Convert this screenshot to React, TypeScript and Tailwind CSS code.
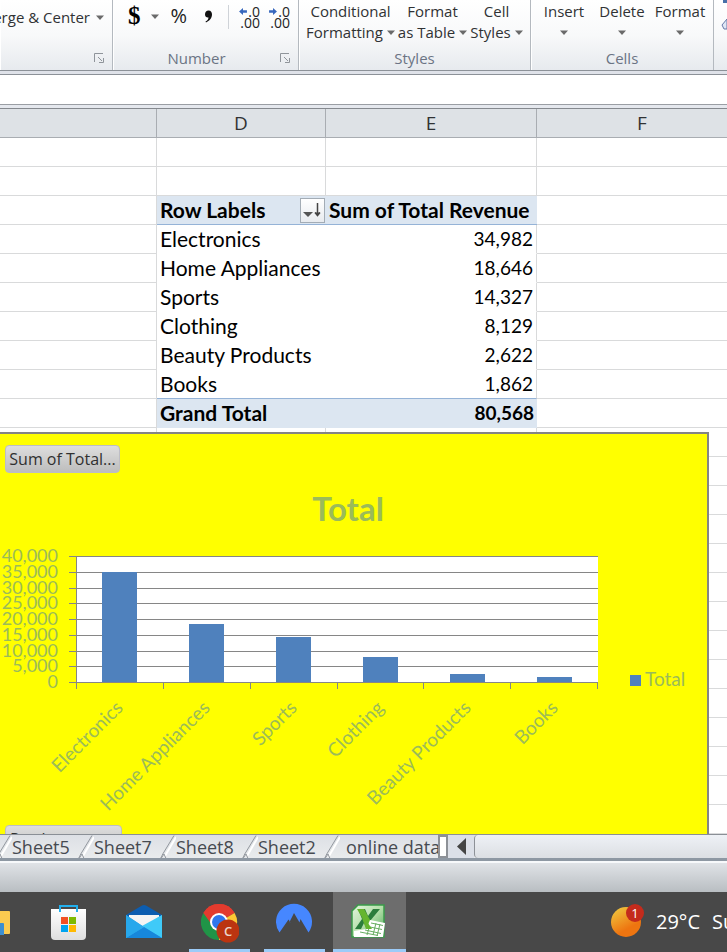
import React from "react";

const UI = "font-['Open_Sans','Noto_Sans',sans-serif]";
const SHEET = "font-['Lato','Liberation_Sans',sans-serif]";

const rows: [string, number][] = [
  ["Electronics", 34982],
  ["Home Appliances", 18646],
  ["Sports", 14327],
  ["Clothing", 8129],
  ["Beauty Products", 2622],
  ["Books", 1862],
];

function Caret() {
  return (
    <svg width="8" height="5" viewBox="0 0 8 5" className="shrink-0" aria-hidden="true">
      <path d="M0 0.5h8L4 5z" fill="#6a6a6a" />
    </svg>
  );
}

function Launcher({ label }: { label: string }) {
  return (
    <button aria-label={label} className="mr-2 p-0">
      <svg width="10" height="10" viewBox="0 0 10 10" fill="none" stroke="#8f949a">
        <path d="M0.5 9V0.5H9M4 4l4 4M9.5 5v4.5H5" />
      </svg>
    </button>
  );
}

function Group({ className, title, children, launcher }: { className: string; title?: string; children: React.ReactNode; launcher?: string }) {
  return (
    <section className={`flex shrink-0 flex-col border-r border-r-[#b4b9bf] shadow-[inset_1px_0_0_#fff] ${className}`}>
      <div className="flex h-[46px] pt-px">{children}</div>
      <div className="flex h-6 items-center text-[15px] leading-6 text-[#6b7484]">
        <h2 className="grow text-center">{title}</h2>
        {launcher && <Launcher label={launcher} />}
      </div>
    </section>
  );
}

function BigButton({ top, bottom, className }: { top: string; bottom?: string; className: string }) {
  return (
    <button className={`flex shrink-0 flex-col items-center whitespace-nowrap text-[15px] leading-[21px] text-[#303234] ${className}`}>
      <span>{top}</span>
      <span className="flex h-[21px] items-center gap-1">
        {bottom}
        <Caret />
      </span>
    </button>
  );
}

function Decimals({ right }: { right?: boolean }) {
  return (
    <button aria-label={right ? "Decrease Decimal" : "Increase Decimal"} className="mt-1 h-6 w-[21px] text-right text-[14px] leading-[11px] text-[#222]">
      <span className="flex items-center justify-between">
        <svg width="8" height="7" viewBox="0 0 9 8" aria-hidden="true">
          <path d={right ? "M9 4L4.5 0v2.5H0v3h4.500V8z" : "M0 4L4.5 0v2.5H9v3H4.500V8z"} fill="#3767bd" />
        </svg>
        .0
      </span>
      <span className="block">.00</span>
    </button>
  );
}

function Ribbon() {
  return (
    <header className={`flex h-[70px] overflow-hidden bg-linear-to-b from-white via-[#f8f9fa] to-[#e7eaee] ${UI}`}>
      <Group className="w-[113px]" title="" launcher="Alignment settings">
        <button className="flex h-8 w-full items-center justify-end gap-1.5 whitespace-nowrap pr-2 text-[15px] text-[#303234]">
          Merge &amp; Center <Caret />
        </button>
      </Group>
      <Group className="w-[186px]" title="Number" launcher="Number settings">
        <div className="flex w-full items-start pl-[15px]">
          <button aria-label="Accounting format" className="flex h-[30px] items-center gap-2.5 font-['Liberation_Serif',serif] text-[25px] font-bold text-black">
            $ <Caret />
          </button>
          <button className="ml-3 h-[30px] text-[20px] leading-[30px] text-[#222]">%</button>
          <button aria-label="Comma style" className="ml-[15px] flex h-[30px] w-3 items-center justify-center">
            <svg width="9" height="13" viewBox="0 0 9 13"><path d="M4.5 0.5C7 .5 8 2.400 8 4.500C8 8 5.500 11 2 12.500L1.500 11.500C3.500 10.500 4.500 9 4.500 7.500C2.500 7.800 1 6.500 1 4.200C1 2 2.500.5 4.500.5z" fill="#111" /></svg>
          </button>
          <span className="ml-3.5 mt-1 h-6 w-px bg-[#cfd3d8]" />
          <span className="ml-2.5 flex gap-[9px]">
            <Decimals />
            <Decimals right />
          </span>
        </div>
      </Group>
      <Group className="w-[232px]" title="Styles">
        <div className="flex gap-1 pl-[7px]">
          <BigButton top="Conditional" bottom="Formatting" className="w-[89px]" />
          <BigButton top="Format" bottom="as Table" className="w-[67px]" />
          <BigButton top="Cell" bottom="Styles" className="w-[53px]" />
        </div>
      </Group>
      <Group className="w-[183px]" title="Cells">
        <div className="flex pl-1">
          <BigButton top="Insert" className="w-[58px]" />
          <BigButton top="Delete" className="w-[58px]" />
          <BigButton top="Format" className="w-[58px]" />
        </div>
      </Group>
      <div className="flex grow flex-col items-end overflow-hidden">
        <svg width="6" height="32" viewBox="0 0 6 32" aria-hidden="true">
          <path d="M2 0h4v3H2z" fill="#4770a8" />
          <path d="M6 19L1 25l2 4h3z" fill="#dfe6f4" stroke="#6678a8" />
        </svg>
      </div>
    </header>
  );
}

const line = "border-[#d9dadb]";

function Sheet() {
  return (
    <table className={`w-[748px] min-w-full table-fixed border-separate border-spacing-0 text-[21px] leading-7 text-black ${SHEET}`}>
      <colgroup>
        <col className="w-[157px]" />
        <col className="w-[169px]" />
        <col className="w-[211px]" />
        <col />
      </colgroup>
      <thead>
        <tr className={`h-[29px] bg-[#dee2e6] text-[19px] text-[#303234] ${UI}`}>
          {["", "D", "E", "F"].map((c) => (
            <th key={c} scope="col" className="border-b border-r border-[#a9adb2] p-0 font-normal">{c}</th>
          ))}
        </tr>
      </thead>
      <tbody>
        {[0, 1].map((i) => <Blank key={i} />)}
        <tr className="h-[29px]">
          <td className={`border-b border-r p-0 ${line}`} />
          <th scope="col" className="whitespace-nowrap border-b border-[#95b3d7] bg-[#dce6f1] p-0 pl-[3px] text-left">
            <span className="flex items-center justify-between pr-px">
              Row Labels
              <button aria-label="Sort and filter" className="flex h-[25px] w-[25px] items-center justify-center border border-[#a3acb5] bg-linear-to-b from-white to-[#e8ebef]">
                <svg width="19" height="17" viewBox="0 0 19 17"><path d="M0 10h10l-5 5z" fill="#555" /><path d="M14.500 1v12M12 10.500l2.500 3 2.500-3" stroke="#444" strokeWidth="1.500" fill="#444" /></svg>
              </button>
            </span>
          </th>
          <th scope="col" className="whitespace-nowrap border-b border-[#95b3d7] bg-[#dce6f1] p-0 pl-[3px] text-left">Sum of Total Revenue</th>
          <td className={`border-b p-0 ${line}`} />
        </tr>
        {rows.map(([name, value], i) => {
          const edge = i === rows.length - 1 ? "border-b border-b-[#95b3d7]" : "border-b border-b-white";
          return (
            <tr key={name} className="h-[29px]">
              <td className={`border-b border-r p-0 ${line}`} />
              <th scope="row" className={`whitespace-nowrap p-0 pl-[3px] text-left font-normal ${edge}`}>{name}</th>
              <td className={`border-r border-r-[#d9dadb] p-0 pr-[3px] text-right text-[19px] ${edge}`}>{value.toLocaleString("en-US")}</td>
              <td className={`border-b p-0 ${line}`} />
            </tr>
          );
        })}
        <tr className="h-[29px] font-bold">
          <td className={`border-b border-r p-0 ${line}`} />
          <th scope="row" className="border-b border-[#dce6f1] bg-[#dce6f1] p-0 pl-[3px] text-left">Grand Total</th>
          <td className="border-b border-[#dce6f1] bg-[#dce6f1] p-0 pr-[3px] text-right text-[19px]">80,568</td>
          <td className={`border-b p-0 ${line}`} />
        </tr>
        {Array.from({ length: 14 }, (_, i) => <Blank key={i} />)}
      </tbody>
    </table>
  );
}

function Blank() {
  return (
    <tr className="h-[29px]">
      {[0, 1, 2, 3].map((c) => <td key={c} className={`border-b border-r p-0 ${line}`} />)}
    </tr>
  );
}

/* Chart coordinates: origin at the inside top-left corner of the yellow area. */
const BASE = 248;
const PLOT_LEFT = 76;
const STEP = 87;

function Chart() {
  return (
    <figure aria-label="Total by category" className="absolute left-0 top-[323px] h-[420px] w-[709px] border-r-2 border-t-2 border-[#848484] bg-[#ffff00]">
      <svg width="707" height="400" viewBox="0 0 707 400" className={SHEET} fill="#9bbb59">
        <text x="348" y="87" textAnchor="middle" fontSize="33" fontWeight="700">Total</text>
        <rect x={PLOT_LEFT} y="122" width="522" height="126" fill="#fff" />
        {Array.from({ length: 9 }, (_, i) => {
          const y = Math.round(BASE - i * 15.75);
          return (
            <g key={i}>
              <rect x="69" y={y} width="529" height="1" fill="#868686" />
              <text x="58" y={y + 6} textAnchor="end" fontSize="18">{(i * 5000).toLocaleString("en-US")}</text>
            </g>
          );
        })}
        {rows.map(([name, value], i) => {
          const h = Math.floor((value / 40000) * 126);
          const x = PLOT_LEFT + i * STEP;
          return (
            <g key={name}>
              <rect x={x + 26} y={BASE - h} width="35" height={h} fill="#4f81bd" />
              <text transform={`translate(${x + 48} ${BASE + 27}) rotate(-45)`} textAnchor="end" fontSize="19">{name}</text>
            </g>
          );
        })}
        {Array.from({ length: 7 }, (_, i) => <rect key={i} x={PLOT_LEFT + i * STEP - (i > 3 ? 1 : 0)} y={BASE} width="1" height="7" fill="#868686" />)}
        <rect x={PLOT_LEFT} y="122" width="1" height="127" fill="#868686" />
        <rect x="630" y="241" width="11" height="11" fill="#4f81bd" />
        <text x="645" y="252" fontSize="19">Total</text>
      </svg>
      <button className={`absolute left-[5px] top-[11px] h-7 w-[115px] rounded border border-[#bdbdc6] bg-linear-to-b from-[#dedede] to-[#bdbdbd] text-[16px] leading-[26px] text-[#303030] ${UI}`}>
        Sum of Total...
      </button>
      <button className={`absolute left-[5px] top-[391px] h-7 w-[117px] rounded border border-[#bdbdc6] bg-linear-to-b from-[#dedede] to-[#bdbdbd] pl-1 text-left text-[16px] leading-[26px] text-[#303030] ${UI}`}>
        Product
      </button>
    </figure>
  );
}

function Tab({ name, className = "w-[82px]" }: { name: string; className?: string }) {
  return (
    <button className={`flex h-full shrink-0 items-center whitespace-nowrap text-[18px] leading-6 text-[#464a50] ${className}`}>
      <svg width="16" height="24" viewBox="0 0 16 24" className="shrink-0" fill="none" aria-hidden="true">
        <path d="M5 21L16 2" stroke="#fff" strokeWidth="2" />
        <path d="M0.500 23.500C2 21 2 20 4 17L14 0.500M1 23.500L4 19L6 23.500" stroke="#92979e" />
      </svg>
      {name}
    </button>
  );
}

function TabBar() {
  return (
    <div className={`flex h-[27px] border-b-[3px] border-t border-b-[#8e98a3] border-t-[#8a8f96] bg-linear-to-b from-[#dde0e5] to-[#e9ebed] ${UI}`}>
      <nav aria-label="Sheets" className="flex w-[438px] shrink-0 overflow-hidden">
        <div className="-ml-1 flex">
          <Tab name="Sheet5" />
          <Tab name="Sheet7" />
          <Tab name="Sheet8" />
          <Tab name="Sheet2" />
          <Tab name="online data" className="w-[130px] gap-1.5" />
        </div>
      </nav>
      <span className="h-full w-[10px] shrink-0 border-2 border-[#8d9197] bg-white" />
      <button aria-label="Scroll left" className="flex w-[26px] shrink-0 items-center justify-center bg-[#dce0e8]">
        <svg width="9" height="17" viewBox="0 0 9 17"><path d="M9 0v17L0 8.500z" fill="#444" /></svg>
      </button>
      <div className="grow rounded-l-sm border-l border-[#8d9197] bg-linear-to-b from-[#eef1f6] to-[#dcdfe3]" />
    </div>
  );
}

function Task({ label, running, active, children }: { label: string; running?: boolean; active?: boolean; children: React.ReactNode }) {
  return (
    <button aria-label={label} className={`flex w-[73px] shrink-0 flex-col items-center justify-between pt-2.5 ${active ? "bg-[#6d6d6d]" : ""}`}>
      {children}
      <span className={`h-[3px] ${active ? "w-full" : "w-[61px]"} ${running ? "bg-[#9ccbf8]" : ""}`} />
    </button>
  );
}

function Taskbar() {
  return (
    <footer className={`flex h-[60px] overflow-hidden bg-[#484848] text-white ${UI}`}>
      <button aria-label="File Explorer" className="flex w-[33px] shrink-0 items-start pt-[18px]">
        <svg width="11" height="26" viewBox="0 0 11 26">
          <path d="M0 1h9a1 1 0 0 1 1 1v21a1 1 0 0 1-1 1H0z" fill="#fbcb50" />
          <path d="M0 13h3a1 1 0 0 1 1 1v11H0z" fill="#3d8fd1" />
        </svg>
      </button>
      <div className="flex shrink-0 gap-0.5">
        <Task label="Microsoft Store">
          <svg width="38" height="40" viewBox="0 0 38 40">
            <defs><linearGradient id="store" x2="0" y2="1"><stop stopColor="#fff" /><stop offset="1" stopColor="#dedede" /></linearGradient></defs>
            <path d="M0 7h35v27a4 4 0 0 1-4 4H4a4 4 0 0 1-4-4z" fill="url(#store)" />
            <path d="M9 10V4h17v6" fill="none" stroke="#22b0ee" strokeWidth="2" />
            <path d="M10 15h7v7h-7z" fill="#f25022" /><path d="M18 15h7v7h-7z" fill="#7fba00" />
            <path d="M10 23h7v7h-7z" fill="#00a4ef" /><path d="M18 23h7v7h-7z" fill="#ffb900" />
          </svg>
        </Task>
        <Task label="Mail">
          <svg width="38" height="40" viewBox="0 0 38 40">
            <path d="M0 13L16 3.500q2-1.200 4 0L36 13v6H0z" fill="#0c5db0" />
            <path d="M3 13h30v9L18 27 3 22z" fill="#f4f4f4" />
            <path d="M0 13l18 12 18-12v23H0z" fill="#2aa5ea" />
            <path d="M36 13v23L16 24z" fill="#3fcaf8" />
            <path d="M0 36L18 25l18 11z" fill="#1787db" />
            <path d="M0 13v23l18-11z" fill="#27a8ec" />
          </svg>
        </Task>
        <Task label="Chrome" running>
          <svg width="38" height="42" viewBox="0 0 38 42">
            <path d="M18 20L2.400 11A18 18 0 0 1 33.600 11z" fill="#e33b2e" />
            <path d="M18 20L33.600 11A18 18 0 0 1 18 38z" fill="#fcc934" />
            <path d="M18 20V38A18 18 0 0 1 2.400 11z" fill="#209447" />
            <path d="M18 11h15.600A18 18 0 0 0 2.400 11L11 23z" fill="#e33b2e" />
            <circle cx="18" cy="20" r="9" fill="#fff" /><circle cx="18" cy="20" r="7" fill="#3077ec" />
            <circle cx="27" cy="29" r="11.500" fill="#bb3410" />
            <text x="27" y="34" textAnchor="middle" fontSize="13" fontWeight="600" fill="#ead5cb">C</text>
          </svg>
        </Task>
        <Task label="NordVPN" running>
          <svg width="38" height="40" viewBox="0 0 38 40">
            <path d="M3.500 30.500A18 18 0 1 1 32.500 30.500L24.500 17l-1 3.500L18 11l-4.500 9 1 .5-2-3z" fill="#4687ff" />
          </svg>
        </Task>
        <Task label="Excel" running active>
          <svg width="38" height="40" viewBox="0 0 38 40">
            <defs><linearGradient id="xl" x1="0" y1="0" x2="1" y2="1"><stop stopColor="#e4f5df" /><stop offset=".5" stopColor="#b4dfa9" /><stop offset="1" stopColor="#4fa85a" /></linearGradient></defs>
            <path d="M1 9L7 3h26v32H1z" fill="url(#xl)" stroke="#3a9a49" strokeWidth="1.500" />
            <path d="M7 7h7l3 7 5-7h7L19 19l4 8h-7l-3-6-3 6H4l7-10z" fill="#2c7d3c" />
            <path d="M6 7h7l11 20h-6z" fill="#65b52f" />
            <path d="M19 18l15 3-2 14H3v-6l12-2z" fill="#fff" />
            <path d="M20 21l12 2.500M19 25l12 2.500M14 28l16 3.500M9 30l18 3.500M25 21l-3 12M29 22l-3 12M18 26l-2 7" stroke="#68ad62" />
            <path d="M11 16l4 2 6 9h-6z" fill="#65b52f" />
          </svg>
        </Task>
      </div>
      <button className="ml-auto flex w-[118px] shrink-0 items-center gap-3 whitespace-nowrap text-[20px]">
        <svg width="35" height="40" viewBox="0 0 35 40" className="mb-1 shrink-0" role="img" aria-label="Weather, 1 alert">
          <defs><linearGradient id="sun" x1="0.200" y1="0.100" x2="0.700" y2="1"><stop stopColor="#efbd39" /><stop offset=".7" stopColor="#ee7510" /></linearGradient></defs>
          <circle cx="17" cy="22" r="15" fill="url(#sun)" />
          <circle cx="26" cy="13" r="9" fill="#c42b1c" />
          <text x="26" y="18" textAnchor="middle" fontSize="13" fill="#fff">1</text>
        </svg>
        <span>29°C</span>
        <span>Sunny</span>
      </button>
    </footer>
  );
}

export default function App() {
  return (
    <div className="w-full overflow-hidden bg-white">
      <Ribbon />
      <div className="h-[5px] border-y border-[#8c9198] bg-[#dfe2e9]" />
      <input aria-label="Formula bar" className="block h-[29px] w-full bg-white px-2 outline-none" />
      <div className="h-[5px] border-y border-b-[#85898f] border-t-[#9a9ea4] bg-[#e5e8ee]" />
      <main className="relative h-[725px] overflow-hidden">
        <Sheet />
        <Chart />
      </main>
      <TabBar />
      <div className="h-[31px] border-t-2 border-[#f7f9fb] bg-linear-to-b from-[#e0e3e7] to-[#b9bec2]" />
      <Taskbar />
    </div>
  );
}
